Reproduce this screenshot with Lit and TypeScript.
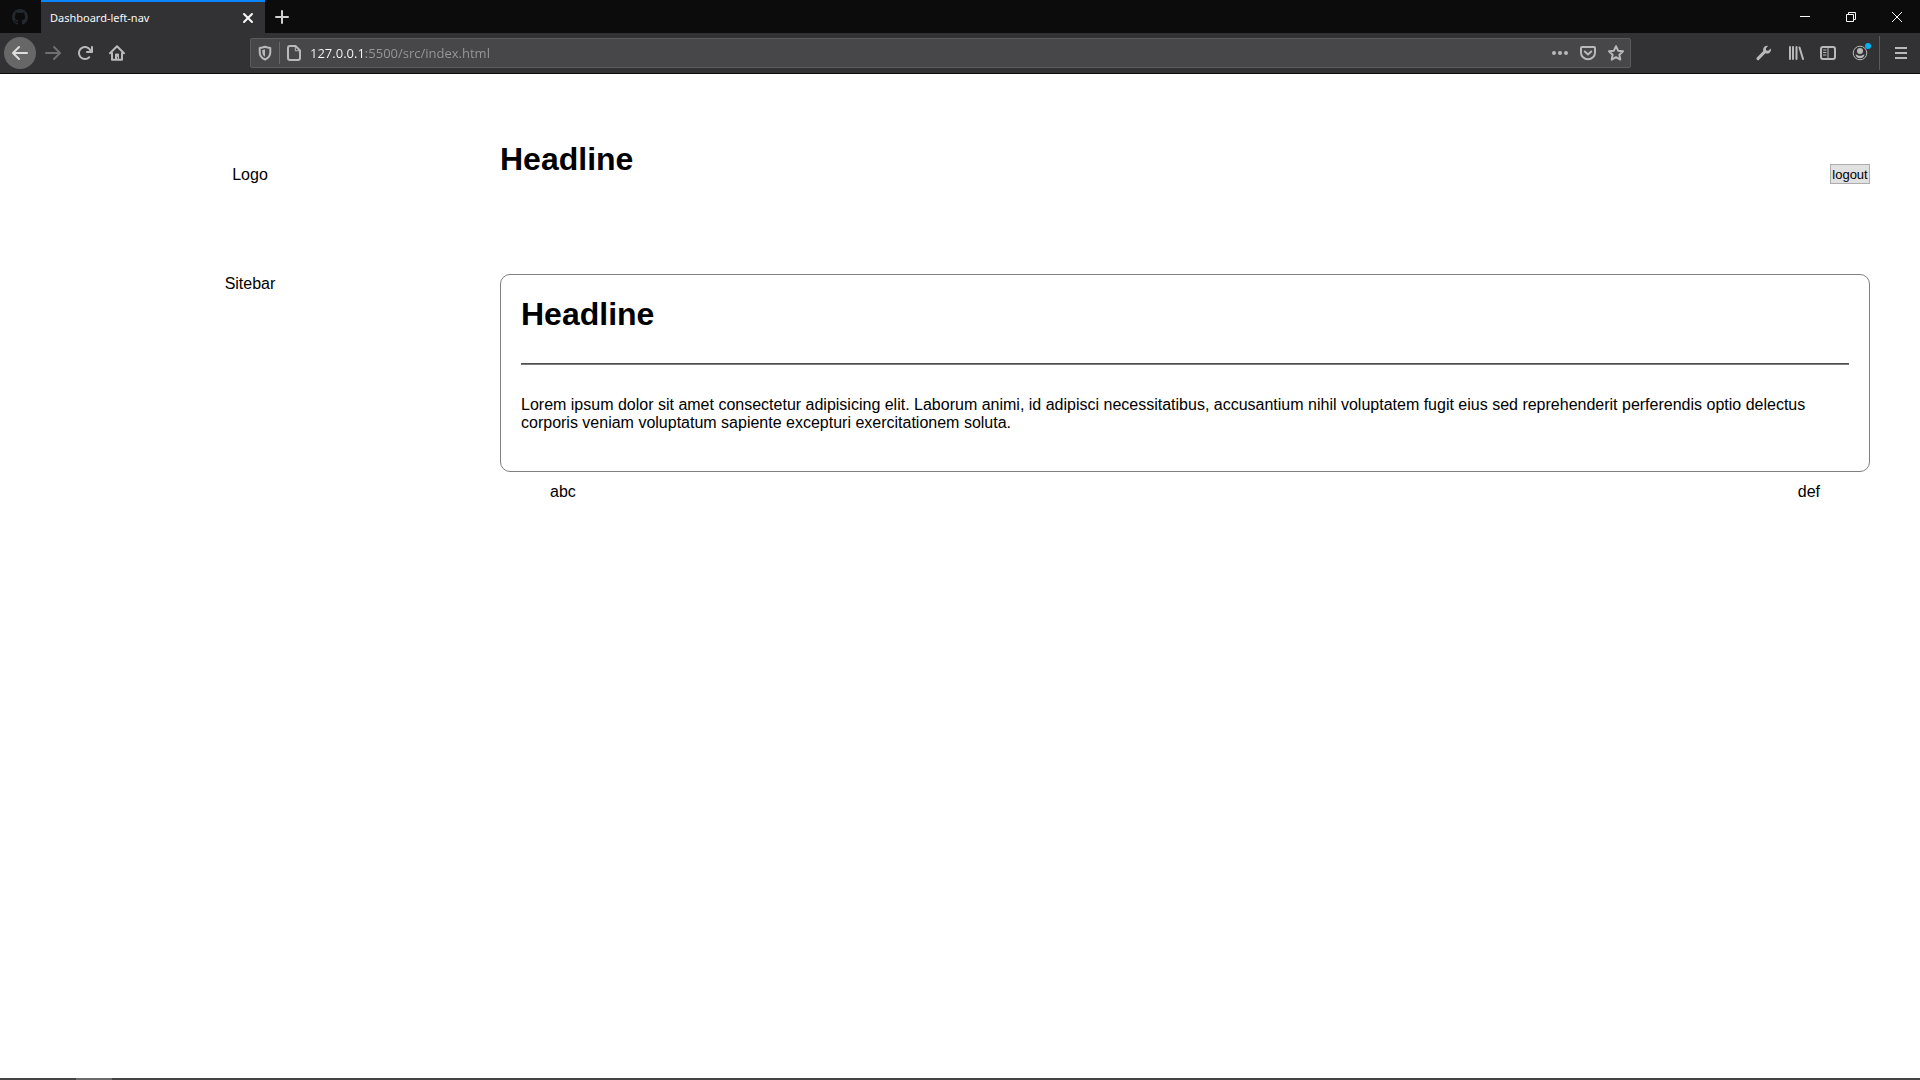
import { LitElement, html, css, svg } from "lit";
import type { SVGTemplateResult } from "lit";
import { customElement, property } from "lit/decorators.js";

const stroke = (d: string, width = 2) =>
  svg`<path d=${d} fill="none" stroke="currentColor" stroke-width=${width} stroke-linecap="round" stroke-linejoin="round"></path>`;
const fill = (d: string) =>
  svg`<path d=${d} fill="currentColor" fill-rule="evenodd"></path>`;

const icons: Record<string, SVGTemplateResult> = {
  github: fill(
    "M8 0C3.58 0 0 3.58 0 8c0 3.54 2.29 6.53 5.47 7.59.4.07.55-.17.55-.38 0-.19-.01-.82-.01-1.49-2.01.37-2.53-.49-2.69-.94-.09-.23-.48-.94-.82-1.13-.28-.15-.68-.52-.01-.53.63-.01 1.08.58 1.23.82.72 1.21 1.87.87 2.33.66.07-.52.28-.87.51-1.07-1.78-.2-3.64-.89-3.64-3.95 0-.87.31-1.59.82-2.15-.08-.2-.36-1.02.08-2.12 0 0 .67-.21 2.2.82.64-.18 1.32-.27 2-.27s1.36.09 2 .27c1.53-1.04 2.2-.82 2.2-.82.44 1.1.16 1.92.08 2.12.51.56.82 1.27.82 2.15 0 3.07-1.87 3.75-3.65 3.95.29.25.54.73.54 1.48 0 1.07-.01 1.93-.01 2.2 0 .21.15.46.55.38A8.01 8.01 0 0 0 16 8c0-4.42-3.58-8-8-8z"
  ),
  close: stroke("M4 4l8 8M12 4l-8 8", 2),
  plus: stroke("M8 2v12M2 8h12", 2),
  minimize: svg`<path d="M3 7.500h10" stroke="currentColor"></path>`,
  restore: svg`<path d="M3.500 5.500h7v7h-7zM5.500 5.500v-2h7v7h-2" fill="none" stroke="currentColor"></path>`,
  exit: svg`<path d="M3 3l10 10M13 3L3 13" stroke="currentColor"></path>`,
  back: fill(
    "M15 7H3.414l4.293-4.293a1 1 0 0 0-1.414-1.414l-6 6a1 1 0 0 0 0 1.414l6 6a1 1 0 0 0 1.414-1.414L3.414 9H15a1 1 0 0 0 0-2z"
  ),
  forward: fill(
    "M1 7h11.586L8.293 2.707a1 1 0 0 1 1.414-1.414l6 6a1 1 0 0 1 0 1.414l-6 6a1 1 0 0 1-1.414-1.414L12.586 9H1a1 1 0 0 1 0-2z"
  ),
  reload: fill(
    "M15 1a1 1 0 0 0-1 1v2.418A6.995 6.995 0 1 0 8 15a6.954 6.954 0 0 0 4.950-2.050 1 1 0 0 0-1.414-1.414A5.019 5.019 0 1 1 12.549 6H10a1 1 0 0 0 0 2h5a1 1 0 0 0 1-1V2a1 1 0 0 0-1-1z"
  ),
  home: svg`${stroke("M1 8.300L8 1.300l7 7M3 8v6.800h10V8")}${fill("M6 14V9.500a1 1 0 0 1 1-1h2a1 1 0 0 1 1 1V14H8.700v-2.200H8V14z")}`,
  shield: svg`${stroke("M8 1.700c2 .8 4 1.100 5.300 1.200v4.300c0 3.300-2 5.800-5.300 7.300-3.300-1.500-5.300-4-5.300-7.300V2.900C4 2.800 6 2.500 8 1.700z")}${fill("M8 4.300v7.500C6.200 10.700 5.300 9 5.300 7.200V4.900C6.300 4.800 7.200 4.600 8 4.300z")}`,
  page: svg`${stroke("M4 1h5.500L14 5.500V13a2 2 0 0 1-2 2H4a2 2 0 0 1-2-2V3a2 2 0 0 1 2-2z")}${stroke("M9.300 1.500v4.300h4.300", 1)}`,
  more: fill("M2 6a2 2 0 1 0 0 4 2 2 0 0 0 0-4zm6 0a2 2 0 1 0 0 4 2 2 0 0 0 0-4zm6 0a2 2 0 1 0 0 4 2 2 0 0 0 0-4z"),
  pocket: svg`${stroke("M2 2h12a1 1 0 0 1 1 1v4.500a7 6.800 0 0 1-14 0V3a1 1 0 0 1 1-1z")}${stroke("M4.800 6.500L8 9.500l3.200-3")}`,
  star: stroke("M8 1.200l2.100 4.500 4.900.6-3.600 3.400.9 4.900L8 12.200l-4.300 2.400.9-4.900L1 6.300l4.900-.6z"),
  wrench: fill(
    "M14.800 3.500l-2.600 2.300-2-.4-.4-1.900L12 .9C9.700.4 7.100 2 7.100 4.700c0 .6.100 1 .2 1.400L.9 12.500a1.500 1.500 0 0 0 0 2.200 1.500 1.500 0 0 0 2.200 0l6.300-6.400c.5.200 1 .3 1.600.3 2.700 0 4.600-2.600 3.800-5.100z"
  ),
  library: svg`${stroke("M2 2v12M5 2v12M8.500 2v12M11.500 2.500L15 14")}`,
  sidebar: svg`${stroke("M3 2h10a2 2 0 0 1 2 2v8a2 2 0 0 1-2 2H3a2 2 0 0 1-2-2V4a2 2 0 0 1 2-2z")}${stroke("M8 2v12M3.500 5h2.500M3.500 7.500h2.500M3.500 10h2.500", 1)}`,
  account: svg`<circle cx="8" cy="8" r="6.800" fill="none" stroke="currentColor"></circle><circle cx="8" cy="6" r="3" fill="currentColor"></circle>${fill("M3.500 9.500c1 0 1.800.3 2.200.8 1.300.7 3.300.7 4.600 0 .4-.5 1.200-.8 2.200-.8-.3 2.200-2 3.700-4.500 3.700S3.800 11.700 3.500 9.500z")}<circle cx="16" cy="1" r="3" fill="#00b3f4"></circle>`,
  menu: svg`<path d="M2 3h12M2 8h12M2 13h12" stroke="currentColor" stroke-width="2"></path>`,
};

@customElement("ui-icon")
export class UiIcon extends LitElement {
  @property() name = "";

  static styles = css`
    :host {
      display: block;
      width: 16px;
      height: 16px;
    }
    .glyph {
      display: block;
      overflow: visible;
    }
  `;

  render() {
    return html`<svg class="glyph" width="16" height="16" viewBox="0 0 16 16" aria-hidden="true">
      ${icons[this.name]}
    </svg>`;
  }
}

@customElement("browser-chrome")
export class BrowserChrome extends LitElement {
  static styles = css`
    :host {
      display: block;
      font-family: "Noto Sans", "Open Sans", sans-serif;
      color: #b9b9ba;
    }
    .tabs {
      display: flex;
      height: 33px;
      background: #0c0c0d;
      color: #f9f9fa;
    }
    button {
      display: flex;
      align-items: center;
      justify-content: center;
      box-sizing: border-box;
      margin: 0;
      padding: 0;
      border: 0;
      background: none;
      color: inherit;
      font: inherit;
    }
    .pinned {
      width: 41px;
      padding-right: 1px;
      color: #24292e;
    }
    .tab {
      display: flex;
      align-items: center;
      box-sizing: border-box;
      width: 224px;
      padding: 0 9px;
      border-top: 2px solid #0a84ff;
      background: #323234;
    }
    .title {
      flex: 1;
      font-size: 11px;
      line-height: 16px;
      text-align: left;
    }
    .new {
      width: 34px;
      color: #d0d0d1;
    }
    .window {
      display: flex;
      margin-left: auto;
    }
    .window button {
      width: 46px;
    }
    .toolbar {
      display: flex;
      align-items: center;
      height: 40px;
      padding: 0 3px 0 4px;
      border-bottom: 1px solid #0c0c0d;
      background: #323234;
    }
    .tool {
      width: 32px;
      height: 32px;
    }
    .back {
      border-radius: 16px;
      background: #676768;
      color: #dededf;
    }
    .forward {
      width: 33px;
      color: #6f6f70;
    }
    .space {
      flex: 0 1 117px;
    }
    .urlbar {
      display: flex;
      flex: 1;
      align-items: center;
      box-sizing: border-box;
      height: 30px;
      border: 1px solid #5b5b5d;
      border-radius: 2px;
      background: #474749;
    }
    .small {
      width: 28px;
      height: 28px;
    }
    .divider {
      width: 1px;
      height: 22px;
      background: #68686a;
    }
    .address {
      flex: 1;
      min-width: 0;
      margin: 0 0 0 2px;
      padding: 0;
      border: 0;
      outline: 0;
      font-family: "Open Sans", "Noto Sans", sans-serif;
      font-size: 13px;
      line-height: 20px;
      color: transparent;
      background: linear-gradient(to right, #f9f9fa 56px, #98989a 56px);
      background-clip: text;
      -webkit-background-clip: text;
    }
    .rule {
      width: 1px;
      height: 34px;
      margin: 0 5px 0 3px;
      background: #5b5b5d;
    }
  `;

  private tool(name: string, label: string, extra = "") {
    return html`<button class="tool ${extra}" aria-label=${label}><ui-icon name=${name}></ui-icon></button>`;
  }

  render() {
    return html`
      <div class="tabs">
        <button class="pinned" aria-label="GitHub"><ui-icon name="github"></ui-icon></button>
        <div class="tab">
          <span class="title">Dashboard-left-nav</span>
          <button aria-label="Close tab"><ui-icon name="close"></ui-icon></button>
        </div>
        <button class="new" aria-label="New tab"><ui-icon name="plus"></ui-icon></button>
        <div class="window">
          <button aria-label="Minimize"><ui-icon name="minimize"></ui-icon></button>
          <button aria-label="Restore"><ui-icon name="restore"></ui-icon></button>
          <button aria-label="Close"><ui-icon name="exit"></ui-icon></button>
        </div>
      </div>
      <div class="toolbar">
        ${this.tool("back", "Back", "back")} ${this.tool("forward", "Forward", "forward")}
        ${this.tool("reload", "Reload")} ${this.tool("home", "Home")}
        <div class="space"></div>
        <div class="urlbar">
          ${this.tool("shield", "Tracking protection", "small")}
          <div class="divider"></div>
          ${this.tool("page", "Site information", "small")}
          <input class="address" aria-label="Address" .value=${"127.0.0.1:5500/src/index.html"} spellcheck="false" />
          ${this.tool("more", "Page actions", "small")}
          ${this.tool("pocket", "Save to Pocket", "small")}
          ${this.tool("star", "Bookmark", "small")}
        </div>
        <div class="space"></div>
        ${this.tool("wrench", "Developer tools")} ${this.tool("library", "Library")}
        ${this.tool("sidebar", "Sidebars")} ${this.tool("account", "Account")}
        <div class="rule"></div>
        ${this.tool("menu", "Menu")}
      </div>
    `;
  }
}

@customElement("app-root")
export class AppRoot extends LitElement {
  static styles = css`
    :host {
      display: flex;
      flex-direction: column;
      min-height: 100vh;
      background: #fff;
      color: #000;
      font-family: "Liberation Sans", Arial, sans-serif;
      font-size: 16px;
      line-height: 20px;
    }
    .page {
      display: grid;
      flex: 1;
      grid-template-columns: 500px 1fr;
      grid-template-rows: 200px 1fr;
      padding-right: 50px;
    }
    .logo {
      align-self: center;
      padding-top: 2px;
      text-align: center;
    }
    .sidebar {
      text-align: center;
    }
    .top {
      display: flex;
      align-items: center;
      justify-content: space-between;
    }
    .headline {
      margin: 0;
      font-size: 32px;
      line-height: 37px;
    }
    .top .headline {
      margin-bottom: 30px;
    }
    .logout {
      box-sizing: border-box;
      min-width: 40px;
      height: 20px;
      padding: 1px 1px 0;
      border: 1px solid #adadad;
      background: #e1e1e1;
      color: #000;
      font-family: inherit;
      font-size: 13px;
      line-height: 18px;
    }
    .card {
      padding: 21px 20px 39px;
      border: 1px solid #808080;
      border-radius: 10px;
    }
    .line {
      height: 0;
      margin: 30px 0 31px;
      border: 0;
      border-top: 1px solid #4f4f51;
      border-bottom: 1px solid #7b7b7d;
    }
    .text {
      margin: 0;
      line-height: 18px;
    }
    .foot {
      display: flex;
      justify-content: space-between;
      padding: 10px 50px;
    }
    .taskbar {
      height: 2px;
      padding-left: 76px;
      background: #444;
    }
    .active {
      width: 36px;
      height: 2px;
      background: #6c6c6c;
    }
  `;

  render() {
    return html`
      <browser-chrome></browser-chrome>
      <div class="page">
        <div class="logo">Logo</div>
        <header class="top">
          <h1 class="headline">Headline</h1>
          <button class="logout">logout</button>
        </header>
        <aside class="sidebar">Sitebar</aside>
        <main>
          <article class="card">
            <h1 class="headline">Headline</h1>
            <hr class="line" />
            <p class="text">
              Lorem ipsum dolor sit amet consectetur adipisicing elit. Laborum animi, id adipisci necessitatibus,
              accusantium nihil voluptatem fugit eius sed reprehenderit perferendis optio delectus corporis veniam
              voluptatum sapiente excepturi exercitationem soluta.
            </p>
          </article>
          <div class="foot"><span>abc</span><span>def</span></div>
        </main>
      </div>
      <div class="taskbar"><div class="active"></div></div>
    `;
  }
}
